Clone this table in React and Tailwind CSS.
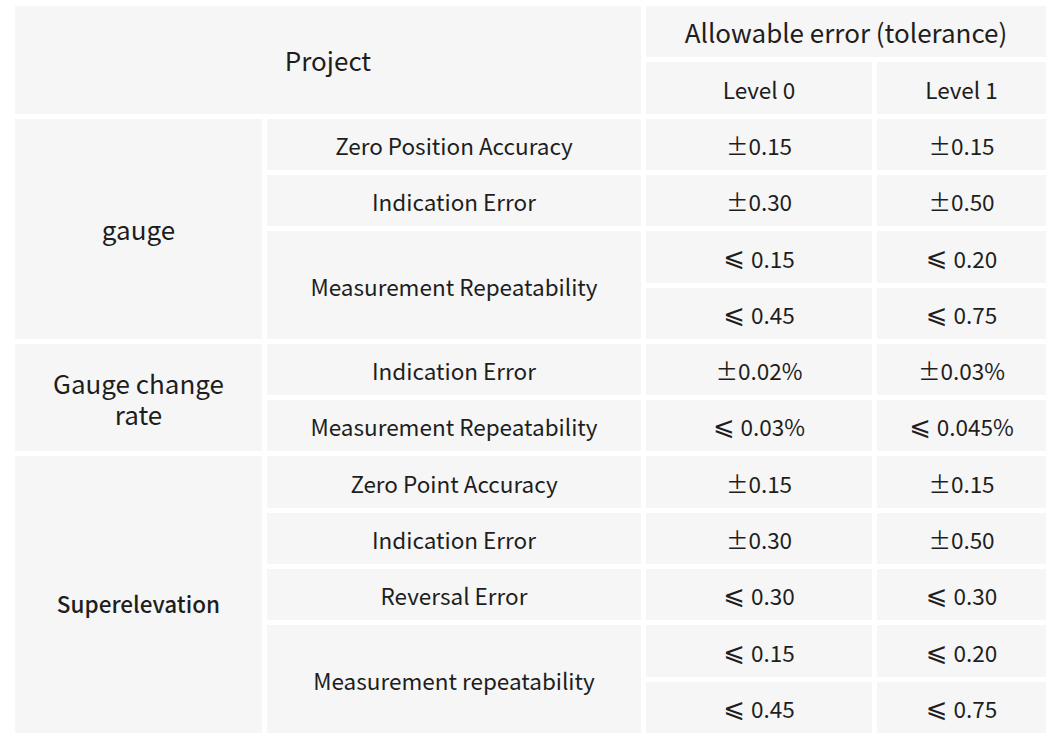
import React from "react";

const cell = "flex items-center justify-center text-center bg-[#f6f6f6] text-[#1e1e1e] pt-[3px]";

function C({ className = "", children }) {
  return <div className={`${cell} ${className}`}>{children}</div>;
}

function Le({ v }) {
  return (
    <span className="inline-flex items-center">
      <span className="text-[1.15em] leading-none mr-[6px]" style={{ fontFamily: '"DejaVu Sans", sans-serif' }}>⩽</span>
      {v}
    </span>
  );
}

export default function App() {
  return (
    <div
      className="w-[1060px] h-[744px] bg-white pt-[6px] pl-[15px]"
      style={{ fontFamily: '"Noto Sans CJK SC", "Noto Sans", sans-serif' }}
    >
      <div className="grid grid-cols-[247px_374px_226px_169px] grid-rows-[repeat(13,1fr)] gap-[5px] h-[727px] text-[22.5px]">
        <C className="col-start-1 col-span-2 row-start-1 row-span-2 text-[26px] !pt-0">Project</C>
        <C className="col-start-3 col-span-2 row-start-1 text-[26px] !pt-0">Allowable error (tolerance)</C>
        <C className="col-start-3 row-start-2">Level 0</C>
        <C className="col-start-4 row-start-2">Level 1</C>

        <C className="col-start-1 row-start-3 row-span-4 text-[26px] !pt-0">gauge</C>
        <C className="col-start-2 row-start-3">Zero Position Accuracy</C>
        <C className="col-start-3 row-start-3">±0.15</C>
        <C className="col-start-4 row-start-3">±0.15</C>
        <C className="col-start-2 row-start-4">Indication Error</C>
        <C className="col-start-3 row-start-4">±0.30</C>
        <C className="col-start-4 row-start-4">±0.50</C>
        <C className="col-start-2 row-start-5 row-span-2">Measurement Repeatability</C>
        <C className="col-start-3 row-start-5"><Le v="0.15" /></C>
        <C className="col-start-4 row-start-5"><Le v="0.20" /></C>
        <C className="col-start-3 row-start-6"><Le v="0.45" /></C>
        <C className="col-start-4 row-start-6"><Le v="0.75" /></C>

        <C className="col-start-1 row-start-7 row-span-2 text-[26px] leading-[31px] px-6 !pt-0">Gauge change rate</C>
        <C className="col-start-2 row-start-7">Indication Error</C>
        <C className="col-start-3 row-start-7">±0.02%</C>
        <C className="col-start-4 row-start-7">±0.03%</C>
        <C className="col-start-2 row-start-8">Measurement Repeatability</C>
        <C className="col-start-3 row-start-8"><Le v="0.03%" /></C>
        <C className="col-start-4 row-start-8"><Le v="0.045%" /></C>

        <C className="col-start-1 row-start-9 row-span-5 font-medium !pt-[19px]">Superelevation</C>
        <C className="col-start-2 row-start-9">Zero Point Accuracy</C>
        <C className="col-start-3 row-start-9">±0.15</C>
        <C className="col-start-4 row-start-9">±0.15</C>
        <C className="col-start-2 row-start-10">Indication Error</C>
        <C className="col-start-3 row-start-10">±0.30</C>
        <C className="col-start-4 row-start-10">±0.50</C>
        <C className="col-start-2 row-start-11">Reversal Error</C>
        <C className="col-start-3 row-start-11"><Le v="0.30" /></C>
        <C className="col-start-4 row-start-11"><Le v="0.30" /></C>
        <C className="col-start-2 row-start-12 row-span-2">Measurement repeatability</C>
        <C className="col-start-3 row-start-12"><Le v="0.15" /></C>
        <C className="col-start-4 row-start-12"><Le v="0.20" /></C>
        <C className="col-start-3 row-start-13"><Le v="0.45" /></C>
        <C className="col-start-4 row-start-13"><Le v="0.75" /></C>
      </div>
    </div>
  );
}
